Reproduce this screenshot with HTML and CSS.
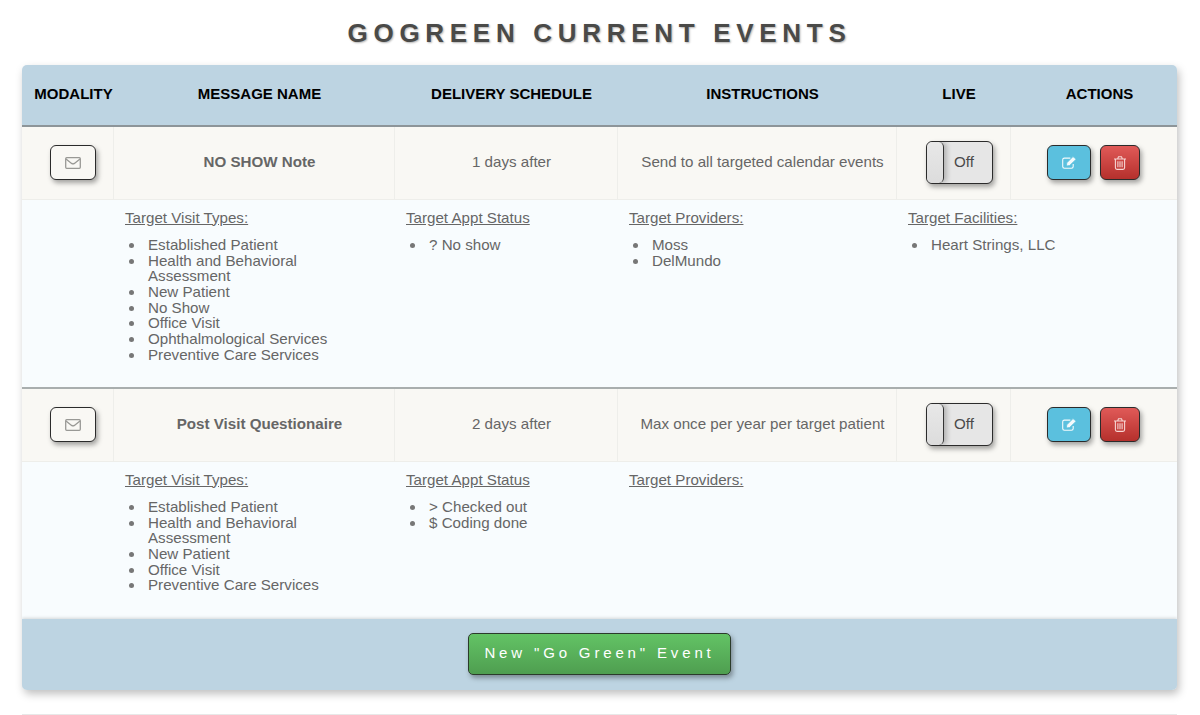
FILE: index.html
```html
<!DOCTYPE html>
<html lang="en">
<head>
    <meta charset="UTF-8">
    <meta name="viewport" content="width=device-width, initial-scale=1.0">
    <title>GoGreen Current Events</title>
    <link rel="stylesheet" href="styles.css">
</head>
<body>
    <h1 class="page-title">GOGREEN CURRENT EVENTS</h1>

    <div class="card">
        <table class="events">
            <colgroup>
                <col class="col-modality">
                <col class="col-name">
                <col class="col-schedule">
                <col class="col-instructions">
                <col class="col-live">
                <col class="col-actions">
            </colgroup>
            <thead>
                <tr>
                    <th>MODALITY</th>
                    <th>MESSAGE NAME</th>
                    <th>DELIVERY SCHEDULE</th>
                    <th>INSTRUCTIONS</th>
                    <th>LIVE</th>
                    <th>ACTIONS</th>
                </tr>
            </thead>
            <tbody>
                <tr class="event-row">
                    <td class="control-cell">
                        <button class="btn-modality" type="button">
                            <svg class="icon" viewBox="0 0 16 12" width="16" height="12"><rect x="0.7" y="0.7" width="14.6" height="10.6" rx="1"/><path d="M1 2 L6.6 6.4 Q8 7.4 9.4 6.4 L15 2"/></svg>
                        </button>
                    </td>
                    <td class="event-name">NO SHOW Note</td>
                    <td>1 days after</td>
                    <td>Send to all targeted calendar events</td>
                    <td class="control-cell">
                        <div class="toggle"><span class="toggle-handle"></span><span class="toggle-label">Off</span></div>
                    </td>
                    <td class="control-cell">
                        <div class="actions">
                            <button class="btn-edit" type="button">
                                <svg class="icon" viewBox="0 0 15 13" width="15" height="13"><path d="M11.2 8 V10.6 Q11.2 12.3 9.5 12.3 H2.4 Q0.7 12.3 0.7 10.6 V3.8 Q0.7 2.1 2.4 2.1 H8.4"/><path class="fill" d="M4.8 6.8 L11 0.6 L14.2 3.2 L7.6 9.6 L4.4 10 Z"/></svg>
                            </button>
                            <button class="btn-delete" type="button">
                                <svg class="icon" viewBox="0 0 12 14" width="12" height="14"><path d="M0 3 H12 M1.4 3 V11.8 Q1.4 13.4 3 13.4 H9 Q10.6 13.4 10.6 11.8 V3 M3.6 3 L4.5 0.7 H7.5 L8.4 3 M3.9 5.2 V11.2 M6 5.2 V11.2 M8.1 5.2 V11.2"/></svg>
                            </button>
                        </div>
                    </td>
                </tr>
                <tr class="detail-row detail-first">
                    <td></td>
                    <td>
                        <div class="detail-title">Target Visit Types:</div>
                        <ul>
                            <li>Established Patient</li>
                            <li>Health and Behavioral Assessment</li>
                            <li>New Patient</li>
                            <li>No Show</li>
                            <li>Office Visit</li>
                            <li>Ophthalmological Services</li>
                            <li>Preventive Care Services</li>
                        </ul>
                    </td>
                    <td>
                        <div class="detail-title">Target Appt Status</div>
                        <ul>
                            <li>? No show</li>
                        </ul>
                    </td>
                    <td>
                        <div class="detail-title">Target Providers:</div>
                        <ul>
                            <li>Moss</li>
                            <li>DelMundo</li>
                        </ul>
                    </td>
                    <td colspan="2">
                        <div class="detail-title">Target Facilities:</div>
                        <ul>
                            <li>Heart Strings, LLC</li>
                        </ul>
                    </td>
                </tr>
                <tr class="event-row">
                    <td class="control-cell">
                        <button class="btn-modality" type="button">
                            <svg class="icon" viewBox="0 0 16 12" width="16" height="12"><rect x="0.7" y="0.7" width="14.6" height="10.6" rx="1"/><path d="M1 2 L6.6 6.4 Q8 7.4 9.4 6.4 L15 2"/></svg>
                        </button>
                    </td>
                    <td class="event-name">Post Visit Questionaire</td>
                    <td>2 days after</td>
                    <td>Max once per year per target patient</td>
                    <td class="control-cell">
                        <div class="toggle"><span class="toggle-handle"></span><span class="toggle-label">Off</span></div>
                    </td>
                    <td class="control-cell">
                        <div class="actions">
                            <button class="btn-edit" type="button">
                                <svg class="icon" viewBox="0 0 15 13" width="15" height="13"><path d="M11.2 8 V10.6 Q11.2 12.3 9.5 12.3 H2.4 Q0.7 12.3 0.7 10.6 V3.8 Q0.7 2.1 2.4 2.1 H8.4"/><path class="fill" d="M4.8 6.8 L11 0.6 L14.2 3.2 L7.6 9.6 L4.4 10 Z"/></svg>
                            </button>
                            <button class="btn-delete" type="button">
                                <svg class="icon" viewBox="0 0 12 14" width="12" height="14"><path d="M0 3 H12 M1.4 3 V11.8 Q1.4 13.4 3 13.4 H9 Q10.6 13.4 10.6 11.8 V3 M3.6 3 L4.5 0.7 H7.5 L8.4 3 M3.9 5.2 V11.2 M6 5.2 V11.2 M8.1 5.2 V11.2"/></svg>
                            </button>
                        </div>
                    </td>
                </tr>
                <tr class="detail-row detail-second">
                    <td></td>
                    <td>
                        <div class="detail-title">Target Visit Types:</div>
                        <ul>
                            <li>Established Patient</li>
                            <li>Health and Behavioral Assessment</li>
                            <li>New Patient</li>
                            <li>Office Visit</li>
                            <li>Preventive Care Services</li>
                        </ul>
                    </td>
                    <td>
                        <div class="detail-title">Target Appt Status</div>
                        <ul>
                            <li>&gt; Checked out</li>
                            <li>$ Coding done</li>
                        </ul>
                    </td>
                    <td>
                        <div class="detail-title">Target Providers:</div>
                    </td>
                    <td colspan="2"></td>
                </tr>
            </tbody>
        </table>
        <div class="card-footer">
            <button class="btn-new" type="button">New "Go Green" Event</button>
        </div>
    </div>

    <hr class="page-rule">
</body>
</html>
```

FILE: styles.css
```css
body {
    font-family: 'Liberation Sans', Arial, sans-serif;
    background-color: #fff;
    color: #666;
    margin: 0;
    padding: 0 23px 0 22px;
    font-size: 15.15px;
}

.page-title {
    margin: 0;
    height: 65px;
    line-height: 67px;
    text-align: center;
    font-size: 26px;
    font-weight: bold;
    letter-spacing: 5.7px;
    color: #4a4a48;
    text-shadow: 1px 1px 2px rgba(0, 0, 0, 0.3);
}

.card {
    border-radius: 5px;
    overflow: hidden;
    background-color: #f8fcfe;
    box-shadow: 2px 4px 8px rgba(0, 0, 0, 0.25);
}

.events {
    width: 100%;
    table-layout: fixed;
    border-collapse: collapse;
}

.col-modality { width: 91px; }
.col-name { width: 281px; }
.col-schedule { width: 223px; }
.col-instructions { width: 279px; }
.col-live { width: 114px; }
.col-actions { width: 167px; }

.events th {
    height: 61px;
    padding: 0 0 4px 12px;
    box-sizing: border-box;
    background-color: #bdd4e2;
    color: #000;
    font-size: 15px;
    font-weight: bold;
    text-align: center;
    border-bottom: 2px solid #8d9599;
}

.event-row td {
    height: 73px;
    padding: 0 0 2px 12px;
    box-sizing: border-box;
    text-align: center;
    background-color: #f9f8f4;
    border-right: 1px solid #eeeeea;
    border-bottom: 1px solid #eeeeea;
}

.event-row td:last-child {
    border-right: 0;
}

.event-row .control-cell {
    padding-bottom: 0;
}

.event-name {
    font-weight: bold;
}

.detail-row td {
    padding: 9px 24px 0 12px;
    box-sizing: border-box;
    vertical-align: top;
}

.detail-first td {
    height: 189px;
    border-bottom: 2px solid #a9aeae;
}

.detail-second td {
    height: 158px;
}

.detail-title {
    text-decoration: underline;
    line-height: 17px;
}

.detail-row ul {
    margin: 11.3px 0 0;
    padding: 0 0 0 23px;
    line-height: 15.7px;
    list-style: none;
}

.detail-row li {
    position: relative;
}

.detail-row li::before {
    content: "";
    position: absolute;
    left: -19px;
    top: 6px;
    width: 5px;
    height: 5px;
    border-radius: 50%;
    background-color: #777;
}

.btn-modality {
    width: 46px;
    height: 35px;
    padding: 0;
    border: 1.5px solid #2b2b2b;
    border-radius: 6px;
    background-color: #f9f8f4;
    box-shadow: 2px 3px 5px rgba(0, 0, 0, 0.35);
    vertical-align: middle;
}

.icon {
    display: block;
    margin: 0 auto;
    fill: none;
    stroke: #999995;
    stroke-width: 1.3;
}

.toggle {
    display: flex;
    align-items: center;
    width: 67px;
    height: 43px;
    margin: 0 0 0 17px;
    border: 1.5px solid #2b2b2b;
    border-radius: 6px;
    background-color: #e6e6e6;
    box-sizing: border-box;
    box-shadow: 2px 3px 5px rgba(0, 0, 0, 0.35);
    overflow: hidden;
}

.toggle-handle {
    width: 16px;
    height: 100%;
    background: linear-gradient(#e8e8e8, #dcdcdc);
    border-right: 1.5px solid #333;
    border-radius: 5px;
    box-shadow: 3px 0 5px rgba(0, 0, 0, 0.22);
}

.toggle-label {
    flex: 1;
    color: #4a4a4a;
    font-size: 15.15px;
    margin-top: -3px;
    padding-right: 7px;
}

.actions {
    display: flex;
    justify-content: center;
    gap: 9px;
    padding-right: 12px;
}

.btn-edit,
.btn-delete {
    height: 35px;
    padding: 0;
    border: 1.5px solid #2b2b2b;
    border-radius: 6px;
    box-shadow: 2px 3px 5px rgba(0, 0, 0, 0.35);
}

.btn-edit {
    width: 44px;
    background-color: #5bc0de;
}

.btn-delete {
    width: 40px;
    background: linear-gradient(#e05a58, #b5302c);
}

.btn-edit .icon,
.btn-delete .icon {
    stroke: #f4fafc;
    stroke-width: 1.1;
}

.btn-delete .icon {
    stroke: #f6d5d3;
}

.btn-edit .fill {
    fill: #f4fafc;
    stroke: #5bc0de;
    stroke-width: 0.8;
}

.card-footer {
    display: flex;
    align-items: center;
    justify-content: center;
    height: 71px;
    background-color: #bdd4e2;
    box-shadow: 0 -1px 3px rgba(0, 0, 0, 0.15);
}

.btn-new {
    width: 263px;
    height: 42px;
    margin-bottom: 2px;
    padding: 0 0 3px;
    border: 1.5px solid #2b3b2b;
    border-radius: 5px;
    background: linear-gradient(#63c365, #4f9e50);
    color: #fff;
    font-family: inherit;
    font-size: 15px;
    letter-spacing: 3.85px;
    box-shadow: 2px 3px 5px rgba(0, 0, 0, 0.35);
}

.page-rule {
    margin: 24px 0 0;
    border: 0;
    border-top: 1px solid #e8e8e8;
}
```
